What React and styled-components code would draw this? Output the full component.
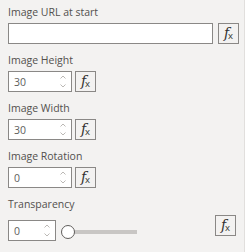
import React from "react";
import styled, { createGlobalStyle } from "styled-components";

const GlobalStyle = createGlobalStyle`
  html, body {
    margin: 0;
    padding: 0;
    background: #ffffff;
  }
  body {
    font-family: "Open Sans", "Noto Sans", sans-serif;
  }
`;

const Panel = styled.div`
  box-sizing: border-box;
  width: 245px;
  height: 252px;
  background: #f3f2f1;
  border-right: 1px solid #e1dfdd;
  padding: 5px 0 0 8px;
`;

const Section = styled.div`
  display: flex;
  flex-direction: column;
  margin-bottom: ${(p) => p.$gap || 9}px;
`;

const Label = styled.div`
  font-size: 10.5px;
  line-height: 15px;
  color: #52504e;
  margin-bottom: 3px;
`;

const Row = styled.div`
  display: flex;
  align-items: ${(p) => p.$align || "center"};
  gap: ${(p) => p.$gap || 3}px;
`;

const TextBox = styled.div`
  box-sizing: border-box;
  width: ${(p) => p.$width}px;
  height: 21px;
  background: #ffffff;
  border: 1px solid #8a8886;
  position: relative;
  display: flex;
  align-items: center;
  padding-left: 5px;
  font-size: 10.5px;
  color: #605e5c;
  margin-top: ${(p) => p.$top || 0}px;
`;

const Spinner = styled.div`
  position: absolute;
  right: 5px;
  top: 3px;
  bottom: 3px;
  display: flex;
  flex-direction: column;
  justify-content: space-between;
`;

const FxButton = styled.div`
  box-sizing: border-box;
  width: 21px;
  height: 21px;
  border: 1px solid #8a8886;
  background: #f3f2f1;
  display: flex;
  align-items: center;
  justify-content: center;
  color: #323130;
  margin-left: ${(p) => (p.$push ? "auto" : "0")};
  margin-right: ${(p) => (p.$push ? "8px" : "0")};
`;

const FxF = styled.span`
  font-family: "DejaVu Serif", "Liberation Serif", serif;
  font-style: italic;
  font-size: 14px;
  line-height: 1;
  margin-top: -1px;
`;

const FxX = styled.span`
  font-family: "Open Sans", sans-serif;
  font-size: 9.5px;
  line-height: 1;
  margin-top: 5px;
  margin-left: -1px;
`;

const Slider = styled.div`
  position: relative;
  width: 76px;
  height: 14px;
  margin-top: 10px;
  display: flex;
  align-items: center;
`;

const Track = styled.div`
  margin-left: 10px;
  flex: 1;
  height: 4px;
  background: #c8c6c4;
`;

const Thumb = styled.div`
  position: absolute;
  left: 0;
  top: 0;
  box-sizing: border-box;
  width: 14px;
  height: 14px;
  border-radius: 50%;
  border: 1px solid #605e5c;
  background: #ffffff;
`;

const Chevron = ({ up }) => (
  <svg width="6" height="4" viewBox="0 0 6 4">
    <path
      d={up ? "M0.5 3.5 L3 1 L5.5 3.5" : "M0.5 0.5 L3 3 L5.5 0.5"}
      fill="none"
      stroke="#b3b0ad"
      strokeWidth="0.9"
    />
  </svg>
);

const Fx = ({ push }) => (
  <FxButton $push={push}>
    <FxF>f</FxF>
    <FxX>x</FxX>
  </FxButton>
);

const Spin = () => (
  <Spinner>
    <Chevron up />
    <Chevron />
  </Spinner>
);

const NumberBox = ({ value, width, top }) => (
  <TextBox $width={width} $top={top}>
    {value}
    <Spin />
  </TextBox>
);

const App = () => (
  <>
    <GlobalStyle />
    <Panel>
      <Section>
        <Label>Image URL at start</Label>
        <Row $gap={5}>
          <TextBox $width={205} />
          <Fx />
        </Row>
      </Section>
      <Section>
        <Label>Image Height</Label>
        <Row>
          <NumberBox value="30" width={64} />
          <Fx />
        </Row>
      </Section>
      <Section>
        <Label>Image Width</Label>
        <Row>
          <NumberBox value="30" width={64} />
          <Fx />
        </Row>
      </Section>
      <Section>
        <Label>Image Rotation</Label>
        <Row>
          <NumberBox value="0" width={64} />
          <Fx />
        </Row>
      </Section>
      <Section>
        <Label>Transparency</Label>
        <Row $align="flex-start" $gap={5}>
          <NumberBox value="0" width={48} top={5} />
          <Slider>
            <Track />
            <Thumb />
          </Slider>
          <Fx push />
        </Row>
      </Section>
    </Panel>
  </>
);

export default App;
